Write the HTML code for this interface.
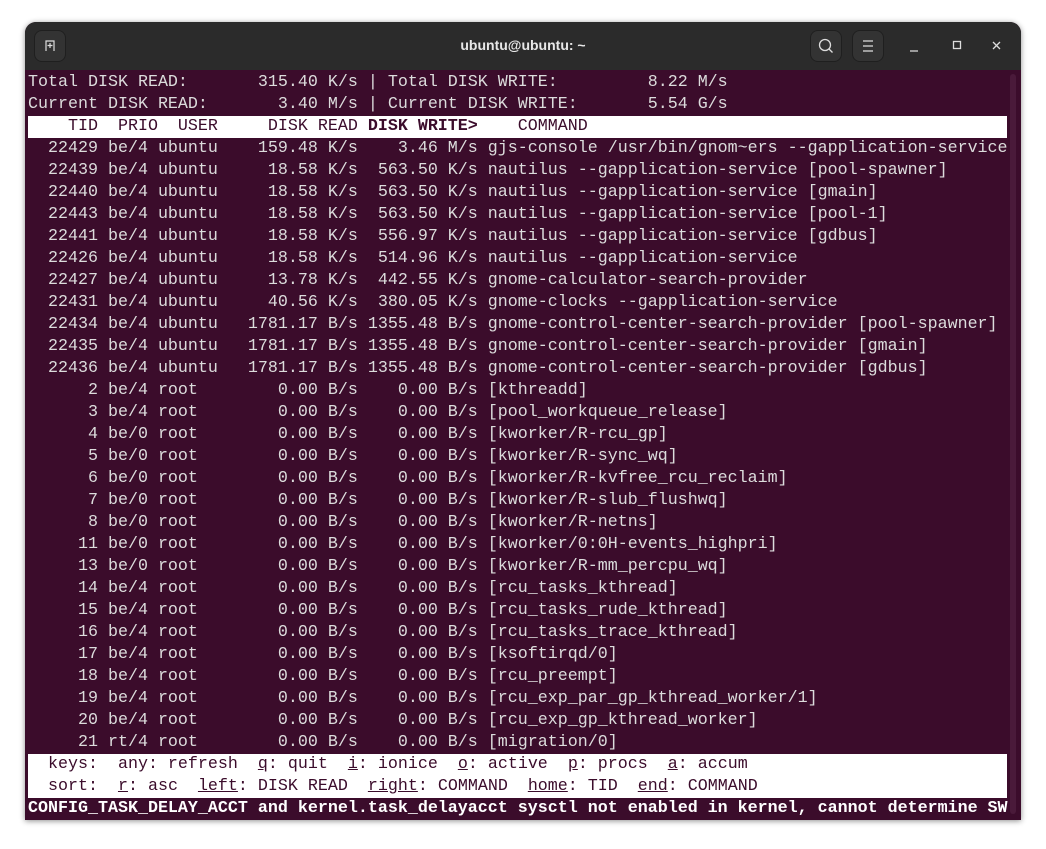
<!DOCTYPE html>
<html><head><meta charset="utf-8"><style>
body{margin:0;width:1046px;height:849px;background:#fff;position:relative;overflow:hidden}
.win{position:absolute;left:25px;top:22px;width:996px;height:798px;border-radius:11px 11px 0 0;background:#3b0c2b;box-shadow:0 1px 6px rgba(0,0,0,.45);overflow:hidden}
.tb{position:absolute;left:0;top:0;width:996px;height:48px;background:#2b2b2b}
.btn{position:absolute;top:8px;width:32px;height:32px;border-radius:8px;background:#333;border:1px solid #1f1f1f;box-sizing:border-box}
.title{position:absolute;left:0;width:996px;top:15px;text-align:center;color:#e8e8e8;font:bold 14px "Liberation Sans",sans-serif}
pre{position:absolute;left:3px;top:50px;margin:0;font:16.67px/22px "Liberation Mono",monospace;color:#dcdcdc;white-space:pre}
.w{background:#fff;color:#3b0c2b;display:block;width:979px}
b{font-weight:bold}
u{text-decoration:underline}
.last{color:#fff;font-weight:bold}
.sb{position:absolute;left:985px;top:52px;width:6px;height:740px;background:#4a1a3a;border-radius:3px}
</style></head><body>
<div class="win">
<div class="tb">
<div class="btn" style="left:9px"><svg width="32" height="32" viewBox="0 0 32 32" style="position:absolute;left:-1px;top:-1px"><path d="M12 21V11h8v10M16 13v5M13.5 15.5h5" fill="none" stroke="#ddd" stroke-width="1.2"/></svg></div>
<div class="title">ubuntu@ubuntu: ~</div>
<div class="btn" style="left:785px"><svg width="32" height="32" viewBox="0 0 32 32" style="position:absolute;left:-1px;top:-1px"><circle cx="15" cy="15" r="5.5" fill="none" stroke="#ddd" stroke-width="1.3"/><path d="M19 19l3.5 3.5" stroke="#ddd" stroke-width="1.3"/></svg></div>
<div class="btn" style="left:827px"><svg width="32" height="32" viewBox="0 0 32 32" style="position:absolute;left:-1px;top:-1px"><path d="M11 11h10M11 16h10M11 21h10" stroke="#ddd" stroke-width="1.2"/></svg></div>
<svg width="996" height="48" style="position:absolute;left:0;top:0"><path d="M885 29h8" stroke="#ddd" stroke-width="1.3"/><rect x="928.5" y="19.5" width="7" height="7" fill="none" stroke="#ddd" stroke-width="1.3"/><path d="M968 20l7 7M975 20l-7 7" stroke="#ddd" stroke-width="1.3"/></svg>
</div>
<div class="sb"></div>
<pre>Total DISK READ:       315.40 K/s | Total DISK WRITE:         8.22 M/s
Current DISK READ:       3.40 M/s | Current DISK WRITE:       5.54 G/s
<span class="w">    TID  PRIO  USER     DISK READ <b>DISK WRITE&gt;</b>    COMMAND</span>  22429 be/4 ubuntu    159.48 K/s    3.46 M/s gjs-console /usr/bin/gnom~ers --gapplication-service
  22439 be/4 ubuntu     18.58 K/s  563.50 K/s nautilus --gapplication-service [pool-spawner]
  22440 be/4 ubuntu     18.58 K/s  563.50 K/s nautilus --gapplication-service [gmain]
  22443 be/4 ubuntu     18.58 K/s  563.50 K/s nautilus --gapplication-service [pool-1]
  22441 be/4 ubuntu     18.58 K/s  556.97 K/s nautilus --gapplication-service [gdbus]
  22426 be/4 ubuntu     18.58 K/s  514.96 K/s nautilus --gapplication-service
  22427 be/4 ubuntu     13.78 K/s  442.55 K/s gnome-calculator-search-provider
  22431 be/4 ubuntu     40.56 K/s  380.05 K/s gnome-clocks --gapplication-service
  22434 be/4 ubuntu   1781.17 B/s 1355.48 B/s gnome-control-center-search-provider [pool-spawner]
  22435 be/4 ubuntu   1781.17 B/s 1355.48 B/s gnome-control-center-search-provider [gmain]
  22436 be/4 ubuntu   1781.17 B/s 1355.48 B/s gnome-control-center-search-provider [gdbus]
      2 be/4 root        0.00 B/s    0.00 B/s [kthreadd]
      3 be/4 root        0.00 B/s    0.00 B/s [pool_workqueue_release]
      4 be/0 root        0.00 B/s    0.00 B/s [kworker/R-rcu_gp]
      5 be/0 root        0.00 B/s    0.00 B/s [kworker/R-sync_wq]
      6 be/0 root        0.00 B/s    0.00 B/s [kworker/R-kvfree_rcu_reclaim]
      7 be/0 root        0.00 B/s    0.00 B/s [kworker/R-slub_flushwq]
      8 be/0 root        0.00 B/s    0.00 B/s [kworker/R-netns]
     11 be/0 root        0.00 B/s    0.00 B/s [kworker/0:0H-events_highpri]
     13 be/0 root        0.00 B/s    0.00 B/s [kworker/R-mm_percpu_wq]
     14 be/4 root        0.00 B/s    0.00 B/s [rcu_tasks_kthread]
     15 be/4 root        0.00 B/s    0.00 B/s [rcu_tasks_rude_kthread]
     16 be/4 root        0.00 B/s    0.00 B/s [rcu_tasks_trace_kthread]
     17 be/4 root        0.00 B/s    0.00 B/s [ksoftirqd/0]
     18 be/4 root        0.00 B/s    0.00 B/s [rcu_preempt]
     19 be/4 root        0.00 B/s    0.00 B/s [rcu_exp_par_gp_kthread_worker/1]
     20 be/4 root        0.00 B/s    0.00 B/s [rcu_exp_gp_kthread_worker]
     21 rt/4 root        0.00 B/s    0.00 B/s [migration/0]
<span class="w">  keys:  any: refresh  <u>q</u>: quit  <u>i</u>: ionice  <u>o</u>: active  <u>p</u>: procs  <u>a</u>: accum
  sort:  <u>r</u>: asc  <u>left</u>: DISK READ  <u>right</u>: COMMAND  <u>home</u>: TID  <u>end</u>: COMMAND</span><span class="last">CONFIG_TASK_DELAY_ACCT and kernel.task_delayacct sysctl not enabled in kernel, cannot determine SW</span></pre>
</div>
</body></html>
